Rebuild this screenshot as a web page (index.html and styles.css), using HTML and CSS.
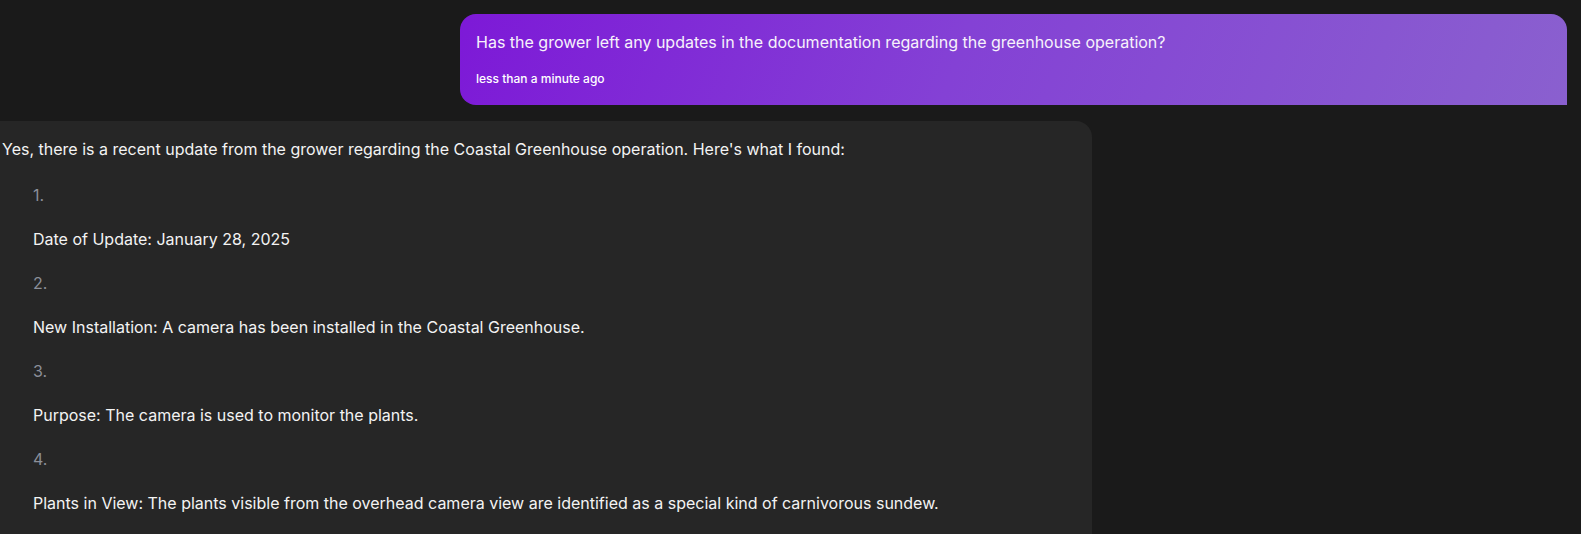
FILE: index.html
```html
<!DOCTYPE html>
<html lang="en">
<head>
<meta charset="utf-8">
<title>Chat</title>
<link rel="stylesheet" href="styles.css">
</head>
<body>
<main class="chat">
  <div class="row row-user">
    <div class="bubble-user">
      <p class="user-text">Has the grower left any updates in the documentation regarding the greenhouse operation?</p>
      <div class="timestamp">less than a minute ago</div>
    </div>
  </div>
  <div class="row row-assistant">
    <div class="bubble-assistant">
      <p class="intro">Yes, there is a recent update from the grower regarding the Coastal Greenhouse operation. Here's what I found:</p>
      <ol class="steps">
        <li><p>Date of Update: January 28, 2025</p></li>
        <li><p>New Installation: A camera has been installed in the Coastal Greenhouse.</p></li>
        <li><p>Purpose: The camera is used to monitor the plants.</p></li>
        <li><p>Plants in View: The plants visible from the overhead camera view are identified as a special kind of carnivorous sundew.</p></li>
      </ol>
    </div>
  </div>
</main>
</body>
</html>
```
FILE: styles.css
```css
* { box-sizing: border-box; }
html, body {
  margin: 0;
  padding: 0;
  background: #1a1a1a;
  height: 100%;
  overflow: hidden;
}
body {
  font-family: Inter, "Noto Sans", sans-serif;
  font-size: 16px;
  line-height: 24px;
  color: #ececec;
}
.chat {
  display: flex;
  flex-direction: column;
  gap: 16px;
  padding: 14px 14px 0 0;
}
.row { display: flex; }
.row-user { justify-content: flex-end; }
.row-assistant { justify-content: flex-start; }
.bubble-user {
  width: 1107px;
  padding: 16px 16px 17px 16px;
  border-radius: 16px 16px 0 16px;
  background: linear-gradient(110deg, #7d19d7 0%, #8441d5 45%, #8a60cf 100%);
  color: #f7f2fb;
}
.user-text { margin: 0; }
.timestamp {
  margin-top: 17px;
  margin-bottom: 1px;
  font-size: 12px;
  line-height: 16px;
  font-weight: 500;
  color: #ffffff;
}
.bubble-assistant {
  width: 1092px;
  padding: 16px 16px 40px 2px;
  border-radius: 0 16px 16px 0;
  background: #262626;
  color: #f3f3f3;
}
.intro { margin: 0 0 22px 0; }
.steps {
  margin: 0;
  padding: 0 0 0 31px;
  list-style: none;
  counter-reset: step;
}
.steps li {
  counter-increment: step;
  margin-bottom: 20px;
}
.steps li::before {
  content: counter(step) ".";
  display: block;
  color: #8b8f99;
}
.steps li p { margin: 20px 0 0 0; }
```
